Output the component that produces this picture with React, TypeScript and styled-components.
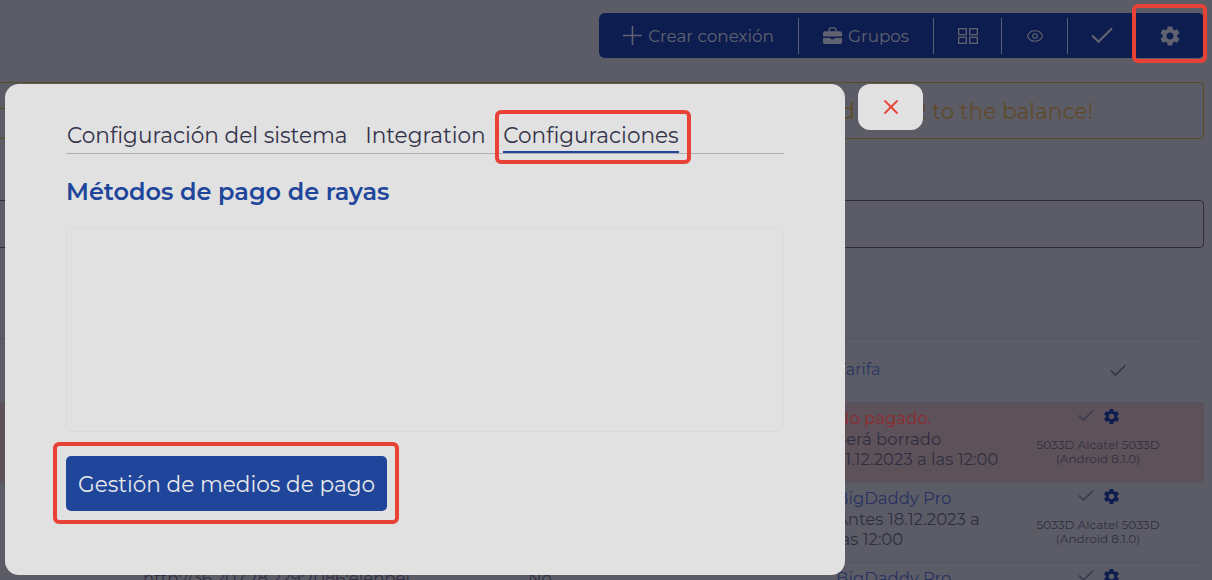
import React from "react";
import styled, { createGlobalStyle } from "styled-components";
import { Eye, Check, X } from "lucide-react";
import { MdSettings } from "react-icons/md";

const GlobalStyle = createGlobalStyle`
  html, body {
    margin: 0;
    padding: 0;
    background: #ffffff;
    overflow: hidden;
  }
  * { box-sizing: border-box; }
`;

const Page = styled.div`
  width: 1212px;
  height: 580px;
  overflow: hidden;
  position: relative;
  font-family: "Montserrat", "Inter", "Open Sans", sans-serif;
  background: #5c5c66;
  color: #2e2a3c;
  display: flex;
  flex-direction: column;
  padding: 13px 8px 0 0;
`;

const ToolbarRow = styled.div`
  display: flex;
  justify-content: flex-end;
  height: 45px;
  flex: none;
`;

const Toolbar = styled.div`
  display: flex;
  align-items: center;
  height: 45px;
  width: 605px;
  background: #0e1d50;
  border-radius: 6px;
  color: #60636f;
  font-size: 16.8px;
`;

const ToolButton = styled.div<{ $w: number; $divided?: boolean }>`
  width: ${(p) => p.$w}px;
  height: 36px;
  flex: none;
  display: flex;
  align-items: center;
  justify-content: center;
  gap: 6px;
  white-space: nowrap;
  border-right: ${(p) => (p.$divided ? "1px solid #5a5f70" : "none")};
`;

const Notice = styled.div`
  position: relative;
  margin: 24px 0 0 -6px;
  height: 57px;
  flex: none;
  border: 1px solid #5c4a22;
  border-radius: 4px;
  color: #5f4a2a;
  font-size: 21.6px;
  display: flex;
  align-items: center;
  justify-content: flex-end;
  padding-right: 110px;
  white-space: nowrap;

  &::before {
    content: "";
    position: absolute;
    left: 0;
    top: 25px;
    width: 12px;
    height: 1px;
    background: #5c4a22;
  }
`;

const SearchBox = styled.div`
  margin: 61px 0 0 -6px;
  height: 48px;
  flex: none;
  border: 1px solid #302a3e;
  border-radius: 4px;
`;

const Table = styled.div`
  margin-top: 90px;
  display: flex;
  flex-direction: column;
  border-top: 1px solid #535361;
`;

const Row = styled.div<{ $h: number; $unpaid?: boolean; $head?: boolean }>`
  height: ${(p) => p.$h}px;
  flex: none;
  display: grid;
  grid-template-columns: ${(p) =>
    p.$head
      ? "143px 385px 308px 196px 172px"
      : "143px 385px 308px 188px 148px"};
  border-bottom: 1px solid #535361;
  background: ${(p) => (p.$unpaid ? "#5e525a" : "transparent")};
`;

const StatusCell = styled.div`
  font-size: 16.5px;
  line-height: 20.5px;
  padding-top: 5px;
  color: #2e2e40;
  white-space: nowrap;
`;

const PlanName = styled.div`
  color: #263260;
`;

const Unpaid = styled.div`
  color: #8f2a30;
`;

const AddressCell = styled.div`
  font-size: 16.5px;
  line-height: 20.5px;
  padding-top: 5px;
  color: #2e2e40;
  white-space: nowrap;
`;

const TariffCell = styled.div`
  font-size: 16px;
  color: #2a3560;
  display: flex;
  align-items: center;
  padding: 0 0 2px 1px;
`;

const HeadCheck = styled.div`
  display: flex;
  align-items: center;
  justify-content: center;
  color: #353548;
`;

const DeviceCell = styled.div`
  display: flex;
  flex-direction: column;
  align-items: center;
  font-size: 12px;
  line-height: 14px;
  color: #2e2e40;
  text-align: center;
  white-space: nowrap;
`;

const DeviceIcons = styled.div`
  display: flex;
  align-items: center;
  justify-content: center;
  gap: 6px;
  height: 26px;
  margin-bottom: 9px;
  color: #0e1d50;
`;

const Overlay = styled.div`
  position: absolute;
  left: 5px;
  top: 84px;
  width: 840px;
  height: 491px;
  background: #e1e1e1;
  border-radius: 14px;
  padding: 36px 61px 0 61px;
  display: flex;
  flex-direction: column;
  color: #33334a;
`;

const Tabs = styled.div`
  display: flex;
  gap: 17.5px;
  height: 34px;
  padding-left: 1px;
  border-bottom: 1px solid #b0b0b0;
  flex: none;
`;

const Tab = styled.div<{ $active?: boolean }>`
  font-size: 21.6px;
  line-height: 31px;
  height: 33px;
  white-space: nowrap;
  border-bottom: ${(p) => (p.$active ? "2px solid #20469c" : "none")};
`;

const Heading = styled.h2`
  margin: 23px 0 0 0;
  font-size: 24px;
  line-height: 30px;
  font-weight: 600;
  color: #20469c;
`;

const EmptyPanel = styled.div`
  margin-top: 21px;
  height: 204px;
  flex: none;
  border: 1px solid #d8dbe2;
  border-radius: 6px;
`;

const ManageButton = styled.div`
  margin-top: 24px;
  width: 321px;
  height: 55px;
  display: flex;
  align-items: center;
  justify-content: center;
  background: #20469c;
  color: #e8e8e8;
  border-radius: 5px;
  font-size: 21.6px;
  white-space: nowrap;
`;

const CloseButton = styled.div`
  position: absolute;
  left: 858px;
  top: 84px;
  width: 65px;
  height: 46px;
  background: #e1e1e1;
  border-radius: 12px;
  display: flex;
  align-items: center;
  justify-content: center;
  color: #e8473c;
`;

const Highlight = styled.div<{ $x: number; $y: number; $w: number; $h: number }>`
  position: absolute;
  left: ${(p) => p.$x}px;
  top: ${(p) => p.$y}px;
  width: ${(p) => p.$w}px;
  height: ${(p) => p.$h}px;
  border: 4px solid #e84236;
  border-radius: 6px;
  pointer-events: none;
`;

const PlusIcon = () => (
  <svg width="19" height="19" viewBox="0 0 19 19" fill="none" stroke="currentColor" strokeWidth="1.6">
    <path d="M9.5 0v19M0 9.5h19" />
  </svg>
);

const BriefcaseIcon = () => (
  <svg width="19" height="19" viewBox="0 0 20 20" fill="currentColor">
    <path d="M6.5 6V3.5A1.5 1.5 0 0 1 8 2h4a1.5 1.5 0 0 1 1.5 1.5V6" fill="none" stroke="currentColor" strokeWidth="1.5" />
    <path d="M2 5.5h16a2 2 0 0 1 2 2V11H0V7.5a2 2 0 0 1 2-2z" />
    <path d="M0 12.5h8V14h4v-1.5h8V17a2 2 0 0 1-2 2H2a2 2 0 0 1-2-2z" />
  </svg>
);

const GridIcon = () => (
  <svg width="20" height="16" viewBox="0 0 20 16" fill="none" stroke="currentColor" strokeWidth="1.3">
    <rect x="0.7" y="0.7" width="7.6" height="6" />
    <rect x="11.7" y="0.7" width="7.6" height="6" />
    <rect x="0.7" y="9.3" width="7.6" height="6" />
    <rect x="11.7" y="9.3" width="7.6" height="6" />
  </svg>
);

const devices = (
  <>
    <DeviceIcons>
      <Check size={20} color="#3c3c50" strokeWidth={2} />
      <MdSettings size={19} />
    </DeviceIcons>
    5033D Alcatel 5033D
    <br />
    (Android 8.1.0)
  </>
);

export default function App() {
  return (
    <Page>
      <GlobalStyle />
      <ToolbarRow>
        <Toolbar>
          <ToolButton $w={200} $divided>
            <PlusIcon />
            Crear conexión
          </ToolButton>
          <ToolButton $w={135} $divided>
            <BriefcaseIcon />
            Grupos
          </ToolButton>
          <ToolButton $w={68} $divided>
            <GridIcon />
          </ToolButton>
          <ToolButton $w={66} $divided>
            <Eye size={18} strokeWidth={1.5} />
          </ToolButton>
          <ToolButton $w={68}>
            <Check size={28} strokeWidth={1.9} />
          </ToolButton>
          <ToolButton $w={68}>
            <MdSettings size={24} />
          </ToolButton>
        </Toolbar>
      </ToolbarRow>
      <Notice>Add USD 2 to the balance!</Notice>
      <SearchBox />
      <Table>
        <Row $h={64} $head>
          <div />
          <div />
          <div />
          <TariffCell>Tarifa</TariffCell>
          <HeadCheck>
            <Check size={20} strokeWidth={2} />
          </HeadCheck>
        </Row>
        <Row $h={80} $unpaid>
          <div />
          <div />
          <div />
          <StatusCell>
            <Unpaid>No pagado.</Unpaid>
            Será borrado
            <br />
            21.12.2023 a las 12:00
          </StatusCell>
          <DeviceCell>{devices}</DeviceCell>
        </Row>
        <Row $h={80}>
          <div />
          <div />
          <div />
          <StatusCell>
            <PlanName>BigDaddy Pro</PlanName>
            Antes 18.12.2023 a
            <br />
            las 12:00
          </StatusCell>
          <DeviceCell>{devices}</DeviceCell>
        </Row>
        <Row $h={80}>
          <div />
          <AddressCell>http://36.207.78.229:7086:elenbel</AddressCell>
          <AddressCell>No</AddressCell>
          <StatusCell>
            <PlanName>BigDaddy Pro</PlanName>
          </StatusCell>
          <DeviceCell>{devices}</DeviceCell>
        </Row>
      </Table>

      <Overlay>
        <Tabs>
          <Tab>Configuración del sistema</Tab>
          <Tab>Integration</Tab>
          <Tab $active>Configuraciones</Tab>
        </Tabs>
        <Heading>Métodos de pago de rayas</Heading>
        <EmptyPanel />
        <ManageButton>Gestión de medios de pago</ManageButton>
      </Overlay>
      <CloseButton>
        <X size={24} strokeWidth={1.9} />
      </CloseButton>

      <Highlight $x={1132} $y={4} $w={75} $h={59} />
      <Highlight $x={495} $y={110} $w={196} $h={54} />
      <Highlight $x={53} $y={442} $w={346} $h={82} />
    </Page>
  );
}
